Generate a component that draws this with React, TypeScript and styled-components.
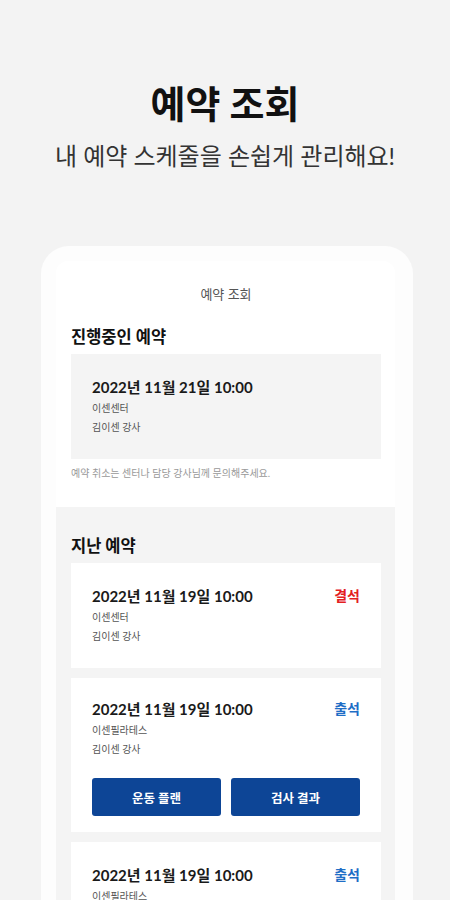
import React from "react";
import styled, { createGlobalStyle } from "styled-components";

const GlobalStyle = createGlobalStyle`
  html, body {
    margin: 0;
    padding: 0;
    background: #f3f3f3;
    font-family: "Lato", "Noto Sans CJK KR", sans-serif;
    color: #111;
  }
  * { box-sizing: border-box; }
`;

type Status = "absent" | "present";

type Booking = {
  date: string;
  place: string;
  teacher: string;
  status?: Status;
  actions?: boolean;
};

const current: Booking = {
  date: "2022년 11월 21일 10:00",
  place: "이센센터",
  teacher: "김이센 강사",
};

const past: Booking[] = [
  { date: "2022년 11월 19일 10:00", place: "이센센터", teacher: "김이센 강사", status: "absent" },
  { date: "2022년 11월 19일 10:00", place: "이센필라테스", teacher: "김이센 강사", status: "present", actions: true },
  { date: "2022년 11월 19일 10:00", place: "이센필라테스", teacher: "김이센 강사", status: "present" },
];

export default function App() {
  return (
    <Page>
      <GlobalStyle />
      <Hero>
        <Title>예약 조회</Title>
        <Subtitle>내 예약 스케줄을 손쉽게 관리해요!</Subtitle>
      </Hero>
      <Phone>
        <Screen>
          <TopSection>
            <ScreenHeader>예약 조회</ScreenHeader>
            <SectionTitle>진행중인 예약</SectionTitle>
            <Card $tone="gray">
              <BookingInfo booking={current} />
            </Card>
            <Notice>예약 취소는 센터나 담당 강사님께 문의해주세요.</Notice>
          </TopSection>
          <PastSection>
            <SectionTitle>지난 예약</SectionTitle>
            <CardList>
              {past.map((b, i) => (
                <Card key={i} $tone="white" $compact={b.actions}>
                  <BookingInfo booking={b} />
                  {b.actions && (
                    <Actions>
                      <ActionButton>운동 플랜</ActionButton>
                      <ActionButton>검사 결과</ActionButton>
                    </Actions>
                  )}
                </Card>
              ))}
            </CardList>
          </PastSection>
        </Screen>
      </Phone>
    </Page>
  );
}

function BookingInfo({ booking }: { booking: Booking }) {
  return (
    <>
      <DateRow>
        <DateText>{booking.date}</DateText>
        {booking.status && (
          <StatusText $status={booking.status}>
            {booking.status === "absent" ? "결석" : "출석"}
          </StatusText>
        )}
      </DateRow>
      <MetaList>
        <Meta>{booking.place}</Meta>
        <Meta>{booking.teacher}</Meta>
      </MetaList>
    </>
  );
}

const Page = styled.div`
  width: 450px;
  height: 900px;
  overflow: hidden;
  display: flex;
  flex-direction: column;
  align-items: center;
`;

const Hero = styled.header`
  display: flex;
  flex-direction: column;
  align-items: center;
  padding-top: 80px;
`;

const Title = styled.h1`
  margin: 0;
  font-size: 38px;
  line-height: 46px;
  font-weight: 700;
  color: #111;
`;

const Subtitle = styled.p`
  margin: 15px 0 0;
  font-size: 24px;
  line-height: 30px;
  font-weight: 400;
  color: #333;
`;

const Phone = styled.div`
  margin-top: 75px;
  width: 372px;
  margin-left: 4px;
  flex: 1;
  background: #fdfdfd;
  border-radius: 28px 28px 0 0;
  padding: 15px 18px 0 15px;
`;

const Screen = styled.div`
  height: 100%;
  background: #fff;
  border-radius: 12px 12px 0 0;
  display: flex;
  flex-direction: column;
`;

const TopSection = styled.section`
  padding: 0 14px 26px 15px;
  display: flex;
  flex-direction: column;
`;

const ScreenHeader = styled.div`
  height: 64px;
  display: flex;
  align-items: center;
  justify-content: center;
  font-size: 13px;
  color: #555;
`;

const SectionTitle = styled.h2`
  margin: 0 0 5px;
  font-size: 16.5px;
  line-height: 24px;
  font-weight: 700;
  color: #111;
`;

const Card = styled.div<{ $tone: "gray" | "white"; $compact?: boolean }>`
  background: ${(p) => (p.$tone === "gray" ? "#f4f4f4" : "#fff")};
  padding: ${(p) => (p.$compact ? "20px 21px 16px" : "22px 21px")};
`;

const Notice = styled.p`
  margin: 6px 0 0;
  font-size: 10px;
  line-height: 16px;
  color: #999;
`;

const PastSection = styled.section`
  flex: 1;
  background: #f4f4f4;
  padding: 27px 14px 0 15px;
  display: flex;
  flex-direction: column;
`;

const CardList = styled.div`
  display: flex;
  flex-direction: column;
  gap: 10px;
`;

const DateRow = styled.div`
  display: flex;
  align-items: center;
  justify-content: space-between;
  height: 20px;
`;

const DateText = styled.span`
  font-size: 15px;
  font-weight: 700;
  color: #1a1a1a;
`;

const StatusText = styled.span<{ $status: Status }>`
  font-size: 14px;
  font-weight: 700;
  color: ${(p) => (p.$status === "absent" ? "#e3201f" : "#1f6ec6")};
`;

const MetaList = styled.div`
  margin-top: 3px;
  display: flex;
  flex-direction: column;
`;

const Meta = styled.div`
  font-size: 10px;
  line-height: 19px;
  color: #555;
`;

const Actions = styled.div`
  display: grid;
  grid-template-columns: 1fr 1fr;
  gap: 10px;
  margin-top: 19px;
`;

const ActionButton = styled.button`
  height: 38px;
  border: none;
  border-radius: 3px;
  background: #0d4596;
  color: #fff;
  font-family: "Lato", "Noto Sans CJK KR", sans-serif;
  font-size: 12.5px;
  font-weight: 700;
  cursor: pointer;
`;
